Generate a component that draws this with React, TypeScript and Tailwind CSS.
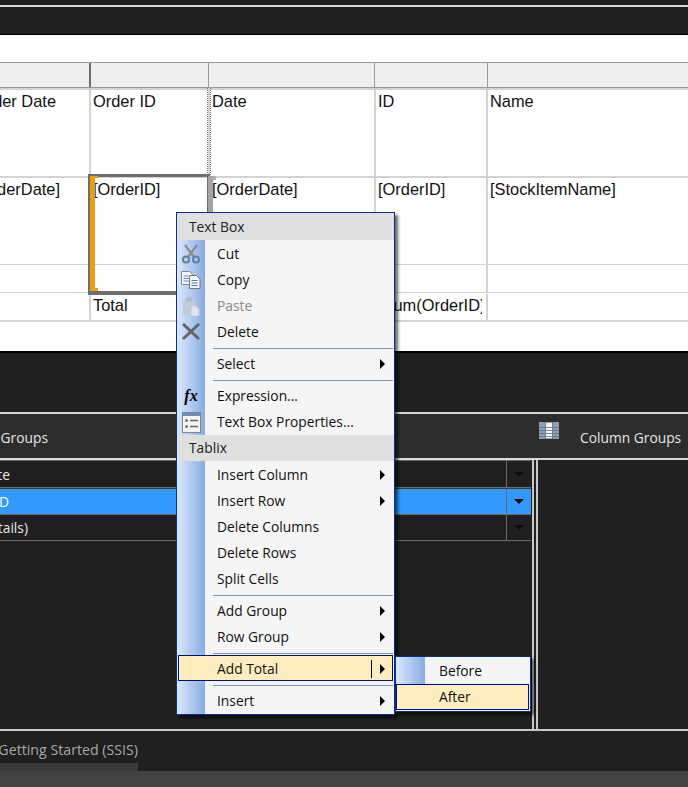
const sans = "font-['Liberation_Sans',Arial,sans-serif]";
const ui = "font-['Open_Sans','Noto_Sans',sans-serif]";

const cols = ["w-[91px]", "w-[119px]", "w-[166px]", "w-[112px]", "flex-1"];

const Cell = ({ width, children, right }: { width: string; children?: React.ReactNode; right?: string }) => (
  <div className={`${width} flex h-full shrink-0 overflow-hidden border-r-2 border-[#d3d3d3] ${right ? "justify-end" : "pl-[2px]"} pt-[1px] last:border-r-0`}>
    <span className={`whitespace-nowrap ${right ?? ""}`}>{children}</span>
  </div>
);

const Arrow = () => (
  <div className="h-0 w-0 border-y-[5px] border-l-[5px] border-y-transparent border-l-black" />
);

const Separator = () => (
  <div className="ml-[36px] mr-[1px] flex h-[6px] items-center pt-[2px]">
    <div className="h-px flex-1 bg-[#7d97cc]" />
  </div>
);

const MenuItem = ({ label, arrow, disabled, icon }: { label: string; arrow?: boolean; disabled?: boolean; icon?: React.ReactNode }) => (
  <div className={`flex h-[26px] items-center pt-[2px] ${disabled ? "text-[#8a8a8a]" : "text-[#111]"}`}>
    <div className="flex w-[28px] shrink-0 items-center justify-center">{icon}</div>
    <span className="ml-[12px] flex-1 whitespace-nowrap">{label}</span>
    {arrow && <div className="mr-[9px]"><Arrow /></div>}
  </div>
);

const Scissors = () => (
  <svg width="20" height="20" viewBox="0 0 20 20" fill="none" stroke="#5f7f9f" strokeWidth="2">
    <path d="M4 1 L13 13 M16 1 L7 13" stroke="#8a8a8a" strokeWidth="2.2" />
    <circle cx="5" cy="15.5" r="3" />
    <circle cx="15" cy="15.5" r="3" />
  </svg>
);

const CopyIcon = () => (
  <svg width="20" height="18" viewBox="0 0 20 18">
    <path d="M.5.5h8l3 3v10H.5z" fill="#f4f6fa" stroke="#888" />
    <path d="M2.5 5h5M2.5 7.5h5M2.5 10h5" stroke="#5d8fc9" />
    <path d="M8.5 4.5h7l3.5 3.5v9.500H8.500z" fill="#f4f6fa" stroke="#777" />
    <path d="M10.500 9.500h6M10.500 12h6M10.500 14.500h6" stroke="#4a83c4" />
  </svg>
);

const PasteIcon = () => (
  <svg width="18" height="19" viewBox="0 0 18 19">
    <rect x="1" y="3" width="12" height="15" fill="#bfcbd8" />
    <rect x="4" y="0.500" width="6" height="4" fill="#aebbc9" />
    <path d="M9 9h5l3 3v7H9z" fill="#dfe5ec" stroke="#c3ccd6" />
  </svg>
);

const DeleteIcon = () => (
  <svg width="20" height="18" viewBox="0 0 20 18" fill="none" stroke="#666" strokeWidth="3">
    <path d="M2 1 L18 16 M18 1 L2 16" />
  </svg>
);

const PropertiesIcon = () => (
  <svg width="19" height="21" viewBox="0 0 19 21">
    <rect x="0.500" y="0.500" width="18" height="20" fill="#f3f3f3" stroke="#7d8790" />
    <rect x="1" y="1" width="17" height="3" fill="#6f8fb4" />
    <circle cx="4.500" cy="8.500" r="1.500" fill="#777" />
    <circle cx="4.500" cy="14.500" r="1.500" fill="#777" />
    <path d="M8 8.500h8M8 14.500h8" stroke="#666" strokeWidth="1.500" />
  </svg>
);

const GridIcon = () => (
  <svg width="20" height="17" viewBox="0 0 20 17">
    <rect width="20" height="17" fill="#8f9fb3" />
    <rect x="7" y="1" width="6" height="15" fill="#f2f4f7" />
    <path d="M0 5.500h20M0 8.500h20M0 11.500h20M0 14.500h20" stroke="#5f6f80" strokeWidth="0.800" />
    <path d="M6.500 0v17M13.500 0v17" stroke="#6f7f90" />
  </svg>
);

const GroupRow = ({ text, width, selected, className }: { text: string; width: string; selected?: boolean; className?: string }) => (
  <div className={`flex items-center border-b border-[#6a6a6a] ${selected ? "bg-[#3399ff] text-white" : "bg-[#1f1f1f] text-[#e6e6e6]"} ${className ?? ""}`}>
    <div className="flex flex-1 pt-[2px]">
      <div className={`flex ${width} justify-end whitespace-nowrap`}>{text}</div>
    </div>
    <div className="flex h-full w-[25px] items-center justify-center border-l border-[#6a6a6a]">
      <div className={`h-0 w-0 border-x-[5px] border-t-[5px] border-x-transparent ${selected ? "border-t-black" : "border-t-[#0c0c0c]"}`} />
    </div>
  </div>
);

export default function App() {
  return (
    <div className={`relative flex h-[787px] w-[688px] flex-col overflow-hidden bg-[#1f1f1f] ${ui} text-[13.8px]`}>
      <div className="h-[5px] bg-[#1f1f1f]" />
      <div className="h-[2px] bg-[#d9d9d9]" />
      <div className="h-[27px] bg-[#1f1f1f]" />
      <div className="h-px bg-black" />

      <div className={`flex h-[316px] flex-col bg-white ${sans} text-[16.4px] leading-[20px] text-[#111]`}>
        <div className="h-[27px]" />
        <div className="flex h-[26px] border-y border-[#9a9a9a] bg-[#efefef]">
          <div className="w-[91px] border-r-2 border-[#6e6e6e]" />
          <div className="w-[118px] border-r border-[#9a9a9a]" />
          <div className="w-[166px] border-r border-[#9a9a9a]" />
          <div className="w-[113px] border-r border-[#9a9a9a]" />
        </div>
        <div className="h-[2px] bg-[#d3d3d3]" />
        <div className="flex h-[86px]">
          <Cell width={cols[0]} right="pr-[33px]">Order Date</Cell>
          <Cell width={cols[1]}>Order ID</Cell>
          <Cell width={cols[2]}>Date</Cell>
          <Cell width={cols[3]}>ID</Cell>
          <Cell width={cols[4]}>Name</Cell>
        </div>
        <div className="h-[2px] bg-[#d3d3d3]" />
        <div className="flex h-[86px]">
          <Cell width={cols[0]} right="pr-[29px]">[OrderDate]</Cell>
          <Cell width={cols[1]}>[OrderID]</Cell>
          <Cell width={cols[2]}>[OrderDate]</Cell>
          <Cell width={cols[3]}>[OrderID]</Cell>
          <Cell width={cols[4]}>[StockItemName]</Cell>
        </div>
        <div className="h-px bg-[#d3d3d3]" />
        <div className="flex h-[27px]">
          <Cell width={cols[0]} />
          <Cell width={cols[1]} />
          <Cell width={cols[2]} />
          <Cell width={cols[3]} />
          <Cell width={cols[4]} />
        </div>
        <div className="h-px bg-[#d3d3d3]" />
        <div className="flex h-[27px] pt-px">
          <Cell width={cols[0]} />
          <Cell width={cols[1]}>Total</Cell>
          <Cell width={cols[2]} />
          <Cell width={cols[3]}>
            <span className="block w-[104px] overflow-hidden">[Sum(OrderID)]</span>
          </Cell>
          <Cell width={cols[4]} />
        </div>
        <div className="h-[2px] bg-[#d3d3d3]" />
      </div>

      <div className="h-[2px] bg-black" />
      <div className="h-[59px] bg-[#1f1f1f]" />
      <div className="h-[2px] bg-[#d9d9d9]" />

      <div className="flex h-[44px] items-center bg-[#2d2d2d] pt-[4px] text-[#e4e4e4]">
        <div className="flex w-[48px] justify-end whitespace-nowrap">Row Groups</div>
        <div className="mb-[16px] ml-[491px]"><GridIcon /></div>
        <span className="ml-[21px] whitespace-nowrap">Column Groups</span>
      </div>
      <div className="h-[2px] bg-[#d9d9d9]" />

      <div className="flex h-[271px] border-b-2 border-[#c8c8c8]">
        <div className="w-[534px] border-r-2 border-[#c8c8c8] pr-px">
          <div className="h-px bg-[#6a6a6a]" />
          <GroupRow text="Order Date" width="w-[10px]" className="h-[27px]" />
          <GroupRow text="Order ID" width="w-[9px]" selected className="h-[27px] border-t border-t-[#3a3a3a]" />
          <GroupRow text="(Details)" width="w-[28px]" className="h-[26px]" />
        </div>
        <div className="ml-[2px] flex-1 border-l-2 border-[#c8c8c8]" />
      </div>

      <div className="flex h-[32px] items-end bg-[#1f1f1f] text-[14.2px] text-[#a8a8a8]">
        <div className="flex w-[138px] justify-end whitespace-nowrap pb-[3px]">Getting Started (SSIS)</div>
      </div>
      <div className="h-[8px] w-[138px] bg-[#3a3a3a]" />
      <div className="flex-1 bg-[#424242]" />

      {/* selected textbox */}
      <div className="absolute left-[88px] top-[174px] h-[121px] w-[122px] border-[3px] border-b-[4px] border-l-2 border-[#6e6e6e]">
        <div className="h-full w-[5px] bg-[#e8a010]" />
      </div>
      <div className="absolute left-[90px] top-[176px] h-[2px] w-[8px] bg-[#e8a010]" />
      <div className="absolute left-[90px] top-[288px] h-[3px] w-[8px] bg-[#e8a010]" />
      <div className="absolute left-[207px] top-[88px] h-[87px] w-[4px] border-x border-dotted border-[#777]" />
      <div className="absolute left-[208px] top-[176px] h-[36px] w-[5px] bg-[#a3a3a3]" />
      <div className="absolute left-[213px] top-[176px] h-[4px] w-[3px] bg-[#b5b5b5]" />

      {/* context menu */}
      <div className="absolute left-[176px] top-[212px] w-[219px] border border-[#0a2f91] bg-[#f5f5f5] pb-[1px] shadow-[3px_3px_3px_rgba(0,0,0,0.6)]">
        <div className="absolute bottom-0 left-0 top-0 w-[28px] bg-gradient-to-r from-[#dbe9fd] to-[#88ace2]" />
        <div className="relative">
          <div className="flex h-[27px] items-center bg-[#e0e0e0] pl-[12px] pt-px text-[#222]">Text Box</div>
          <MenuItem label="Cut" icon={<Scissors />} />
          <MenuItem label="Copy" icon={<CopyIcon />} />
          <MenuItem label="Paste" disabled icon={<PasteIcon />} />
          <MenuItem label="Delete" icon={<DeleteIcon />} />
          <Separator />
          <MenuItem label="Select" arrow />
          <Separator />
          <MenuItem label="Expression..." icon={<span className="font-['Liberation_Serif',serif] text-[16px] font-bold italic text-black">fx</span>} />
          <MenuItem label="Text Box Properties..." icon={<PropertiesIcon />} />
          <div className="mt-px flex h-[26px] items-center bg-[#e0e0e0] pl-[12px] text-[#222]">Tablix</div>
          <MenuItem label="Insert Column" arrow />
          <MenuItem label="Insert Row" arrow />
          <MenuItem label="Delete Columns" />
          <MenuItem label="Delete Rows" />
          <MenuItem label="Split Cells" />
          <Separator />
          <MenuItem label="Add Group" arrow />
          <MenuItem label="Row Group" arrow />
          <Separator />
          <div className="mx-px flex h-[26px] items-center border border-[#00107a] bg-[#ffedc0] pt-[2px] text-[#111]">
            <span className="ml-[38px] flex-1">Add Total</span>
            <div className="mr-[8px] h-[18px] w-px bg-black" />
            <div className="mr-[7px]"><Arrow /></div>
          </div>
          <Separator />
          <MenuItem label="Insert" arrow />
        </div>
      </div>

      {/* submenu */}
      <div className="absolute left-[395px] top-[656px] w-[136px] border border-[#0a2f91] bg-[#f5f5f5] text-[#111] shadow-[3px_3px_3px_rgba(0,0,0,0.6)]">
        <div className="flex h-[27px] items-center">
          <div className="h-full w-[29px] bg-gradient-to-r from-[#dbe9fd] to-[#88ace2]" />
          <span className="ml-[14px] pt-px">Before</span>
        </div>
        <div className="mb-px mr-px flex h-[26px] items-center border border-[#00107a] bg-[#ffedc0] pl-[42px]">After</div>
      </div>
    </div>
  );
}
